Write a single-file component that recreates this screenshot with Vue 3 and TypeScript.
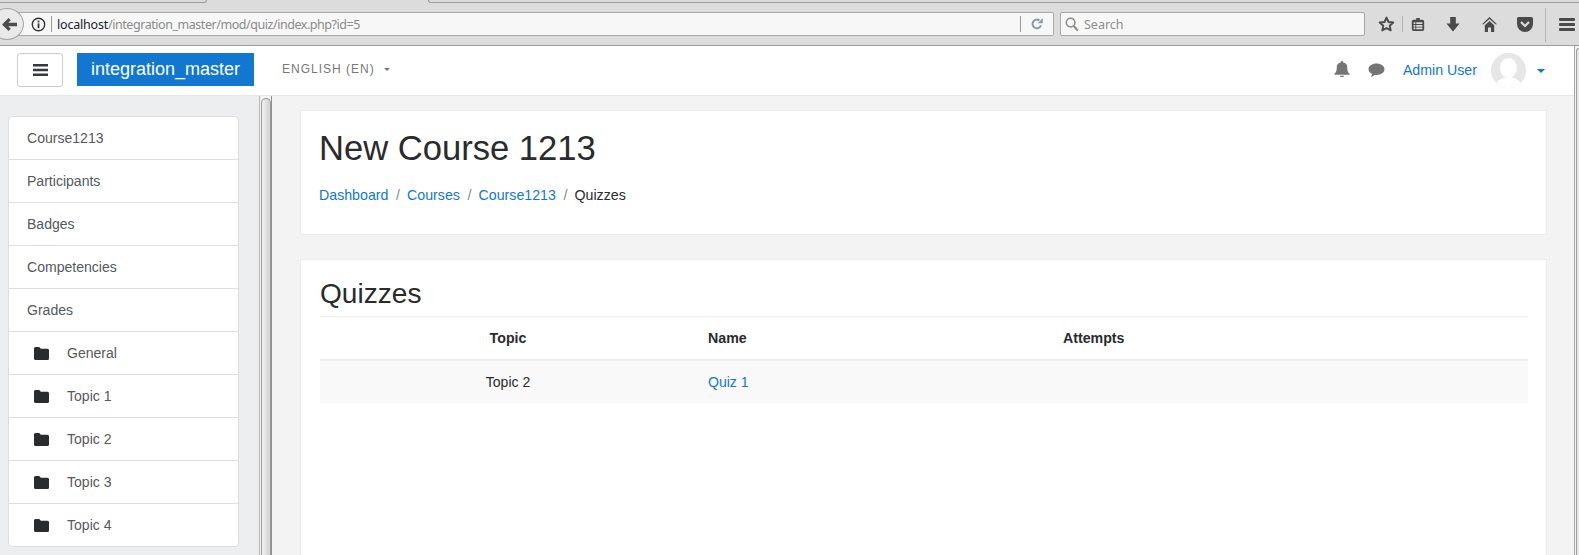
<script setup lang="ts">
const navItems: string[] = ['Course1213', 'Participants', 'Badges', 'Competencies', 'Grades']
const topics: string[] = ['General', 'Topic 1', 'Topic 2', 'Topic 3', 'Topic 4']
</script>

<template>
  <div class="page">
    <header class="chrome">
      <div class="tabline">
        <div class="tab-active"></div>
        <div class="tab-gap"></div>
        <div class="tab-rest"></div>
      </div>
      <div class="toolbar">
        <div class="back">
          <svg width="17" height="15" viewBox="0 0 18 16"><path d="M8 1 1 8l7 7 2.400-2.400L7.600 9.800H17V6.200H7.600l2.800-2.800z" fill="#4b4b4b" /></svg>
        </div>
        <div class="urlbar">
          <svg class="info" width="15" height="15" viewBox="0 0 15 15">
            <circle cx="7.500" cy="7.500" r="6.200" fill="none" stroke="#333" stroke-width="1.400" />
            <rect x="6.600" y="6.400" width="1.800" height="4.800" fill="#333" />
            <rect x="6.600" y="3.600" width="1.800" height="1.800" fill="#333" />
          </svg>
          <span class="sep"></span>
          <span class="url"><span class="host">localhost</span>/integration_master/mod/quiz/index.php?id=5</span>
          <span class="sep right"></span>
          <svg class="reload" width="12" height="12" viewBox="0 0 14 14">
            <path d="M11.600 8.400A5 5 0 1 1 9.800 2.900" fill="none" stroke="#8d9aa5" stroke-width="2.400" />
            <path d="M7.800 6h6V0z" fill="#8d9aa5" />
          </svg>
        </div>
        <div class="searchbar">
          <svg width="14" height="15" viewBox="0 0 14 15">
            <circle cx="5.600" cy="5.600" r="4.300" fill="none" stroke="#8a8a8a" stroke-width="1.500" />
            <path d="m8.800 9 4 4.600" stroke="#8a8a8a" stroke-width="2" />
          </svg>
          <span>Search</span>
        </div>
        <div class="tools">
          <svg class="t-star" width="17" height="16" viewBox="0 0 17 16"><path d="m8.500 1.600 2 4.400 4.800.5-3.600 3.200 1 4.700-4.200-2.400-4.200 2.400 1-4.700L1.700 6.500 6.500 6z" fill="none" stroke="#4a4a4a" stroke-width="1.900" stroke-linejoin="round" /></svg>
          <span class="tool-sep"></span>
          <svg class="t-list" width="14" height="15" viewBox="0 0 14 17">
            <path d="M5 1h4v2h3a2 2 0 0 1 2 2v9a2 2 0 0 1-2 2H2a2 2 0 0 1-2-2V5a2 2 0 0 1 2-2h3z" fill="#4a4a4a" />
            <path d="M2 6h2v2H2zM5 6h7v2H5zM2 9h2v2H2zM5 9h7v2H5zM2 12h2v2H2zM5 12h7v2H5z" fill="#dcdcdc" />
          </svg>
          <svg class="t-down" width="14" height="15" viewBox="0 0 14 16"><path d="M4 0h6v7h4l-7 8.500-7-8.500h4z" fill="#4a4a4a" /></svg>
          <svg class="t-home" width="15" height="15" viewBox="0 0 15 15"><path d="M7.500 0 0 7.200h1.600L7.500 2l5.900 5.200H15z M2.800 8.200 7.500 4l4.700 4.200V15H9V10.500H6V15H2.800z" fill="#4a4a4a" /></svg>
          <svg class="t-pocket" width="16" height="15" viewBox="0 0 16 15"><path d="M1.500 0h13A1.500 1.500 0 0 1 16 1.500V7A8 8 0 0 1 0 7V1.500A1.500 1.500 0 0 1 1.500 0z" fill="#4a4a4a" /><path d="m4 5 4 4 4-4" fill="none" stroke="#dcdcdc" stroke-width="2.200" /></svg>
          <span class="tool-sep tall"></span>
          <div class="t-menu"><i></i><i></i><i></i></div>
        </div>
      </div>
    </header>

    <div class="window">
      <div class="viewport">
        <nav class="navbar">
          <button class="toggle" type="button" aria-label="Menu">
            <svg width="15" height="12" viewBox="0 0 15 12"><path d="M0 0h15v2.400H0zM0 4.800h15v2.400H0zM0 9.600h15V12H0z" fill="#373a3c" /></svg>
          </button>
          <a class="brand">integration_master</a>
          <span class="lang">ENGLISH (EN)<i class="caret grey"></i></span>
          <div class="nav-right">
            <svg class="bell" width="16" height="16" viewBox="0 0 15 15"><path d="M7.500 0a1.100 1.100 0 0 1 1.100 1.300A4.500 4.500 0 0 1 12.400 6c0 3.600 1 4.900 2.300 6.200v.8H.3v-.8C1.600 10.900 2.600 9.600 2.600 6a4.500 4.500 0 0 1 3.800-4.700A1.100 1.100 0 0 1 7.500 0zM5.700 13.800h3.600a1.800 1.800 0 0 1-3.600 0z" fill="#757575" /></svg>
            <svg class="bubble" width="17" height="15" viewBox="0 0 16 14"><path d="M8 .5c4.200 0 7.500 2.400 7.500 5.400S12.200 11.300 8 11.300c-.6 0-1.200 0-1.800-.1-1 .9-2.200 1.500-3.700 1.800.7-.8 1.200-1.700 1.300-2.700C1.800 9.400.5 7.800.5 5.900.5 2.900 3.800.5 8 .500z" fill="#757575" /></svg>
            <a class="user">Admin User</a>
            <svg class="avatar" width="35" height="35" viewBox="0 0 35 35">
              <defs><clipPath id="av"><circle cx="17.500" cy="17.500" r="17.500" /></clipPath></defs>
              <circle cx="17.500" cy="17.500" r="17.500" fill="#e6e6e6" />
              <g clip-path="url(#av)" fill="#fff">
                <ellipse cx="17.500" cy="15" rx="8.500" ry="10" />
                <ellipse cx="17.500" cy="36" rx="14" ry="12" />
              </g>
            </svg>
            <i class="caret blue"></i>
          </div>
        </nav>

        <div class="body">
          <aside class="sidebar">
            <ul class="list">
              <li v-for="item in navItems" :key="item" class="row">{{ item }}</li>
              <li v-for="topic in topics" :key="topic" class="row sub">
                <svg width="15" height="13" viewBox="0 0 15 13"><path d="M1.500 0h3.700l1.600 1.700h6.700A1.500 1.500 0 0 1 15 3.200v8.300a1.500 1.500 0 0 1-1.500 1.500h-12A1.500 1.500 0 0 1 0 11.500v-10A1.500 1.500 0 0 1 1.500 0z" fill="#292b2c" /></svg>
                <span>{{ topic }}</span>
              </li>
            </ul>
          </aside>
          <div class="drag"><div class="thumb"></div></div>
          <main class="content">
            <section class="card head-card">
              <h1>New Course 1213</h1>
              <ol class="crumbs">
                <li><a>Dashboard</a></li>
                <li class="slash">/</li>
                <li><a>Courses</a></li>
                <li class="slash">/</li>
                <li><a>Course1213</a></li>
                <li class="slash">/</li>
                <li>Quizzes</li>
              </ol>
            </section>
            <section class="card quiz-card">
              <h2>Quizzes</h2>
              <table>
                <colgroup>
                  <col class="c1" />
                  <col class="c2" />
                  <col />
                </colgroup>
                <thead>
                  <tr>
                    <th class="center">Topic</th>
                    <th>Name</th>
                    <th>Attempts</th>
                  </tr>
                </thead>
                <tbody>
                  <tr>
                    <td class="center">Topic 2</td>
                    <td><a>Quiz 1</a></td>
                    <td></td>
                  </tr>
                </tbody>
              </table>
            </section>
          </main>
        </div>
      </div>
      <div class="page-scroll"><div class="page-thumb"></div></div>
    </div>
  </div>
</template>

<style>
html, body { margin: 0; overflow: hidden; }
</style>

<style scoped>
.page {
  width: 1579px;
  height: 555px;
  overflow: hidden;
  display: flex;
  flex-direction: column;
  font-family: "Liberation Sans", Arial, sans-serif;
  font-size: 14.06px;
  color: #292b2c;
  background: #fff;
}
.chrome {
  height: 46px;
  flex: none;
  box-sizing: border-box;
  background: #dcdcdc;
  border-bottom: 1px solid #9c9c9c;
  font-family: "Noto Sans", sans-serif;
}
.tabline { height: 3px; display: flex; }
.tab-active {
  width: 207px;
  box-sizing: border-box;
  border-bottom: 1px solid #9c9c9c;
  border-right: 1px solid #9c9c9c;
  border-radius: 0 0 6px 0;
}
.tab-gap { width: 221px; }
.tab-rest {
  flex: 1;
  box-sizing: border-box;
  border-bottom: 1px solid #9c9c9c;
  border-left: 1px solid #9c9c9c;
  border-radius: 0 0 0 6px;
}
.toolbar {
  height: 42px;
  display: flex;
  align-items: flex-start;
  position: relative;
}
.back {
  position: absolute;
  left: -10px;
  top: 5px;
  width: 34px;
  height: 32px;
  box-sizing: border-box;
  border: 1px solid #a3a3a3;
  border-radius: 50%;
  background: #e9e9e9;
  display: flex;
  align-items: center;
  padding-left: 10px;
  z-index: 1;
}
.urlbar {
  margin-top: 9px;
  width: 1054px;
  height: 24px;
  box-sizing: border-box;
  border: 1px solid #a8a8a8;
  border-left: 0;
  border-radius: 0 2px 2px 0;
  background: #f7f7f7;
  display: flex;
  align-items: center;
  padding-left: 31px;
}
.sep { width: 1px; height: 16px; background: #9a9a9a; margin: 0 5px 0 5px; }
.sep.right { margin: 0 0 0 auto; }
.url {
  font-size: 12.500px;
  letter-spacing: -0.45px;
  color: #8a8a8a;
  white-space: nowrap;
}
.host { color: #1c1c2c; letter-spacing: -0.2px; }
.reload { margin: 0 10px 0 10px; }
.searchbar {
  margin: 9px 0 0 6px;
  width: 305px;
  height: 24px;
  box-sizing: border-box;
  border: 1px solid #a8a8a8;
  border-radius: 2px;
  background: #f7f7f7;
  display: flex;
  align-items: center;
  gap: 5px;
  padding-left: 4px;
  font-size: 12.500px;
  color: #8d8d8d;
}
.tools { position: relative; flex: 1; height: 42px; }
.tools svg, .tool-sep, .t-menu { position: absolute; }
.t-star { left: 13px; top: 13px; }
.tool-sep { left: 37px; top: 13px; width: 1px; height: 16px; background: #b5b5b5; }
.t-list { left: 46px; top: 14px; }
.t-down { left: 81px; top: 14px; }
.t-home { left: 117px; top: 14px; }
.t-pocket { left: 152px; top: 14px; }
.tool-sep.tall { left: 180px; top: 5px; height: 34px; }
.t-menu { left: 194px; top: 15px; width: 16px; display: flex; flex-direction: column; gap: 2px; }
.t-menu i { display: block; height: 3px; width: 16px; background: #4a4a4a; border-radius: 1px; }

.window { flex: 1; display: flex; min-height: 0; }
.viewport { flex: 1; min-width: 0; display: flex; flex-direction: column; }
.page-scroll {
  width: 5px;
  flex: none;
  box-sizing: border-box;
  border-left: 1px solid #a8a8a8;
  background: #f2f2f2;
  padding: 2px 0 0 1px;
}
.page-thumb {
  height: 100%;
  border: 1px solid #a0a0a0;
  border-right: 0;
  border-bottom: 0;
  border-radius: 4px 0 0 0;
  background: #e6e6e6;
}
.navbar {
  height: 50px;
  flex: none;
  box-sizing: border-box;
  border-bottom: 1px solid #e6e6e6;
  background: #fff;
  display: flex;
  align-items: flex-start;
  padding: 7px 29px 0 17px;
}
.toggle {
  width: 46px;
  height: 34px;
  box-sizing: border-box;
  border: 1px solid #ccc;
  border-radius: 3px;
  background: #fff;
  padding: 0;
  display: flex;
  align-items: center;
  justify-content: center;
}
.brand {
  margin-left: 14px;
  width: 177px;
  height: 33px;
  background: #1177d1;
  color: #fff;
  font-size: 18px;
  line-height: 33px;
  text-align: center;
}
.lang {
  margin: 8px 0 0 28px;
  font-size: 12px;
  letter-spacing: 1px;
  line-height: 16px;
  color: #777;
  display: flex;
  align-items: center;
}
.caret {
  display: block;
  width: 0;
  height: 0;
  border-left: 3px solid transparent;
  border-right: 3px solid transparent;
}
.caret.grey { border-top: 3px solid #777; margin-left: 9px; }
.nav-right { margin-left: auto; display: flex; align-items: flex-start; height: 42px; }
.bell { margin-top: 8px; }
.bubble { margin: 10px 0 0 18px; }
.user { margin: 8px 0 0 18px; color: #1177d1; line-height: 18px; font-size: 14.200px; }
.avatar { margin: 0 0 0 14px; }
.caret.blue { border-top: 4px solid #1177d1; border-left-width: 4px; border-right-width: 4px; margin: 16px 0 0 11px; }

.body { flex: 1; display: flex; min-height: 0; background: #f3f3f3; }
.sidebar {
  width: 259px;
  flex: none;
  box-sizing: border-box;
  background: #eceeef;
  padding: 20px 0 0 8px;
}
.list {
  list-style: none;
  margin: 0;
  padding: 0;
  width: 231px;
  box-sizing: border-box;
  background: #fff;
  border: 1px solid #dedede;
  border-radius: 4px;
}
.row {
  height: 43px;
  box-sizing: border-box;
  padding: 0 18px;
  line-height: 42px;
  color: #55595c;
  border-bottom: 1px solid #dedede;
  display: flex;
  align-items: center;
}
.row:last-child { border-bottom: 0; height: 42px; }
.row.sub { padding-left: 25px; }
.row.sub span { margin-left: 18px; }
.drag {
  width: 13px;
  flex: none;
  box-sizing: border-box;
  border-left: 1px solid #b8b8b8;
  background: #f3f3f3;
  padding: 2px 0 0 1px;
  border-right: 1px solid #8f8f8f;
}
.thumb {
  height: 100%;
  border: 1px solid #9a9a9a;
  border-bottom: 0;
  border-radius: 5px 5px 0 0;
  background: linear-gradient(90deg, #f2f2f2, #cfcfcf);
}
.content {
  flex: 1;
  min-width: 0;
  padding: 14px 27px 0 28px;
  display: flex;
  flex-direction: column;
  gap: 24px;
  overflow: hidden;
}
.card {
  background: #fff;
  border: 1px solid #ebebeb;
  box-sizing: border-box;
}
.head-card { height: 125px; padding: 17px 18px 0; flex: none; }
h1 {
  margin: 0;
  font-size: 34.600px;
  font-weight: 400;
  line-height: 40px;
  color: #292b2c;
}
.crumbs {
  list-style: none;
  margin: 17px 0 0;
  padding: 0;
  display: flex;
  font-size: 14.200px;
  line-height: 21px;
  white-space: nowrap;
}
.crumbs a, td a { color: #1177d1; }
.slash { color: #818a91; padding: 0 7px 0 7.700px; }
.quiz-card { flex: none; height: 400px; padding: 15px 18px 0 19px; }
h2 {
  margin: 0;
  font-size: 28.100px;
  font-weight: 400;
  line-height: 37px;
  height: 41px;
  border-bottom: 1px solid #f0f0f0;
  color: #292b2c;
}
table { width: 100%; border-collapse: collapse; table-layout: fixed; }
.c1 { width: 376px; }
.c2 { width: 355px; }
th, td {
  text-align: left;
  padding: 0 12px;
  color: #292b2c;
}
th { height: 42px; font-weight: 700; font-size: 14.200px; border-bottom: 2px solid #eceeef; }
td { height: 42px; background: #f9f9f9; }
.center { text-align: center; }
</style>
